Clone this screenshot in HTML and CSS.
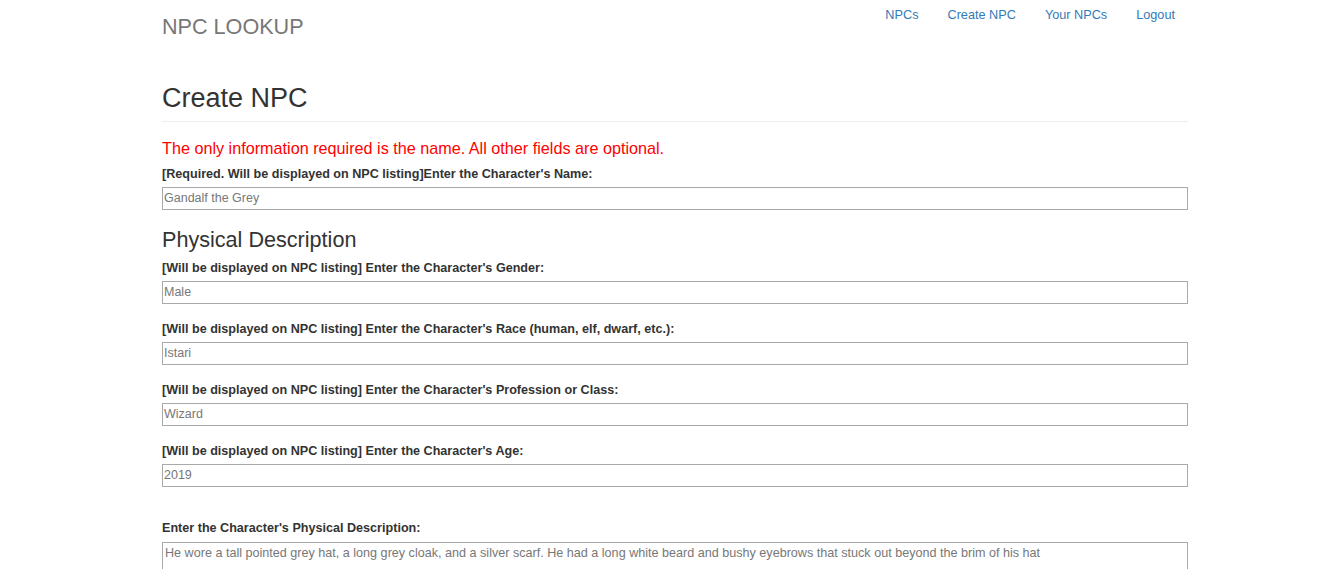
FILE: index.html
```html
<!DOCTYPE html>
<html lang="en">
<head>
<meta charset="utf-8">
<title>Create NPC</title>
<link rel="stylesheet" href="styles.css">
</head>
<body>
<div class="page">
  <nav class="navbar">
    <a class="brand" href="#">NPC LOOKUP</a>
    <ul class="nav-links">
      <li><a href="#">NPCs</a></li>
      <li><a href="#">Create NPC</a></li>
      <li><a href="#">Your NPCs</a></li>
      <li><a href="#">Logout</a></li>
    </ul>
  </nav>

  <div class="page-header">
    <h1>Create NPC</h1>
  </div>

  <p class="notice">The only information required is the name. All other fields are optional.</p>

  <form class="npc-form">
    <div class="form-group">
      <label>[Required. Will be displayed on NPC listing]Enter the Character's Name:</label>
      <input type="text" class="field" placeholder="Gandalf the Grey">
    </div>

    <h3 class="section-title">Physical Description</h3>

    <div class="form-group">
      <label>[Will be displayed on NPC listing] Enter the Character's Gender:</label>
      <input type="text" class="field" placeholder="Male">
    </div>
    <div class="form-group">
      <label>[Will be displayed on NPC listing] Enter the Character's Race (human, elf, dwarf, etc.):</label>
      <input type="text" class="field" placeholder="Istari">
    </div>
    <div class="form-group">
      <label>[Will be displayed on NPC listing] Enter the Character's Profession or Class:</label>
      <input type="text" class="field" placeholder="Wizard">
    </div>
    <div class="form-group">
      <label>[Will be displayed on NPC listing] Enter the Character's Age:</label>
      <input type="text" class="field" placeholder="2019">
    </div>

    <div class="form-group spaced">
      <label>Enter the Character's Physical Description:</label>
      <textarea class="field area" rows="4" placeholder="He wore a tall pointed grey hat, a long grey cloak, and a silver scarf. He had a long white beard and bushy eyebrows that stuck out beyond the brim of his hat"></textarea>
    </div>
  </form>
</div>
</body>
</html>
```

FILE: styles.css
```css
* { box-sizing: border-box; }

html, body {
  margin: 0;
  padding: 0;
  background: #fff;
}

body {
  font-family: "Liberation Sans", Arial, Helvetica, sans-serif;
  font-size: 14px;
  line-height: 20px;
  color: #333;
}

.page {
  width: 1026px;
  margin-left: 162px;
}

.navbar {
  display: flex;
  justify-content: space-between;
  align-items: flex-start;
  height: 50px;
}

.brand {
  display: block;
  margin-top: 15px;
  font-size: 21.6px;
  line-height: 24px;
  color: #777;
  text-decoration: none;
}

.nav-links {
  display: flex;
  list-style: none;
  margin: 0;
  padding: 5px 0 0;
}

.nav-links li + li {
  margin-left: 29px;
}

.nav-links li:last-child {
  margin-right: 13px;
}

.nav-links a {
  display: block;
  font-size: 12.7px;
  line-height: 20px;
  color: #337ab7;
  text-decoration: none;
}

.page-header {
  margin-top: 33px;
  padding-bottom: 8px;
  border-bottom: 1px solid #eee;
}

.page-header h1 {
  margin: 0;
  font-size: 27px;
  font-weight: 400;
  line-height: 30px;
  color: #333;
}

.notice {
  margin: 15px 0 5px;
  font-size: 16.2px;
  line-height: 22px;
  color: #f00;
}

.npc-form {
  margin: 0;
}

.form-group {
  margin-bottom: 15px;
}

.form-group label {
  display: block;
  margin-bottom: 3px;
  font-size: 12.6px;
  font-weight: 700;
  line-height: 20px;
  color: #333;
}

.field {
  display: block;
  width: 100%;
  height: 23px;
  margin: 0;
  padding: 0 1px 2px;
  border: 1px solid #a9a9a9;
  border-radius: 0;
  background: #fff;
  font-family: "Liberation Sans", Arial, Helvetica, sans-serif;
  font-size: 12.5px;
  color: #333;
  outline: none;
}

.field::placeholder {
  color: #777;
  opacity: 1;
}

.area {
  height: 80px;
  margin-top: 4px;
  padding: 2px 2px;
  resize: none;
  font-size: 12.6px;
  line-height: 17px;
}

.spaced label {
  margin-bottom: 0;
}

.section-title {
  margin: 18px 0 6px;
  font-size: 21.6px;
  font-weight: 400;
  line-height: 24px;
  color: #333;
}

.spaced {
  margin-top: 31px;
}
```
